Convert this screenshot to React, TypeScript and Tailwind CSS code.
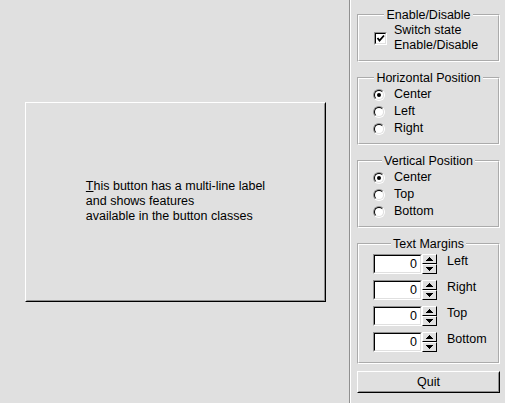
import React from 'react';
import clsx from 'clsx';

function Group({ title, className, children }: { title: string; className?: string; children: React.ReactNode }) {
    return (
        <fieldset className={clsx('border-2 border-white [border-style:groove]', className)}>
            <legend className="mx-auto px-[2px] leading-[16px]">{title}</legend>
            <div className="pl-[14px]">{children}</div>
        </fieldset>
    );
}

function Radio({ checked, label }: { checked?: boolean; label: string }) {
    return (
        <div className="flex h-[17px] items-center">
            <span className="flex h-[12px] w-[12px] rounded-full border border-t-[#909090] border-l-[#909090] border-b-white border-r-white">
                <span className="flex flex-1 items-center justify-center rounded-full border border-t-black border-l-black border-b-[#e0e0e0] border-r-[#e0e0e0] bg-white">
                    {checked && <span className="h-[4px] w-[4px] rounded-full bg-black" />}
                </span>
            </span>
            <span className="ml-[9px]">{label}</span>
        </div>
    );
}

function SpinButton({ up }: { up?: boolean }) {
    return (
        <div className="flex h-[10px] items-center justify-center border border-t-white border-l-white border-b-black border-r-black">
            <svg width="7" height="4" viewBox="0 0 7 4" shapeRendering="crispEdges">
                {up ? <polygon points="0,4 3.5,0 7,4" fill="black" /> : <polygon points="0,0 3.5,4 7,0" fill="black" />}
            </svg>
        </div>
    );
}

function Spinner({ label }: { label: string }) {
    return (
        <div className="flex h-[20px] items-start">
            <div className="flex h-[20px] w-[49px] border border-t-[#909090] border-l-[#909090] border-b-white border-r-white">
                <div className="flex flex-1 items-center justify-end border border-t-black border-l-black border-b-[#e0e0e0] border-r-[#e0e0e0] bg-white pr-[3px]">
                    0
                </div>
            </div>
            <div className="flex w-[15px] flex-col">
                <SpinButton up />
                <SpinButton />
            </div>
            <span className="ml-[10px] leading-[15px]">{label}</span>
        </div>
    );
}

export default function App() {
    return (
        <div className="flex h-[403px] w-[505px] overflow-hidden bg-[#e0e0e0] font-['Liberation_Sans',Arial,sans-serif] text-[12.5px] leading-[15px] text-black">
            {/* Big multi-line button */}
            <div className="flex w-[349px] items-center justify-center pl-[2px]">
                <div className="h-[200px] w-[301px] border border-t-white border-l-white border-b-black border-r-black">
                    <div className="flex h-full items-center justify-center border border-t-[#e0e0e0] border-l-[#e0e0e0] border-b-[#909090] border-r-[#909090]">
                        <div className="text-left">
                            <div><span className="underline">T</span>his button has a multi-line label</div>
                            <div>and shows features</div>
                            <div>available in the button classes</div>
                        </div>
                    </div>
                </div>
            </div>

            <div className="w-[2px] border-l border-r border-l-[#909090] border-r-white" />

            {/* Controls */}
            <div className="flex flex-1 flex-col pl-[6px] pr-[5px] pt-[7px]">
                <Group title="Enable/Disable" className="pb-[7px]">
                    <div className="flex items-center">
                        <span className="ml-[1px] flex h-[13px] w-[13px] border border-t-[#909090] border-l-[#909090] border-b-white border-r-white">
                            <span className="flex flex-1 items-center justify-center border border-t-black border-l-black border-b-[#e0e0e0] border-r-[#e0e0e0] bg-white">
                                <svg width="9" height="9" viewBox="0 0 9 9">
                                    <path d="M1.5 4 L3.5 6.5 L8 1.5" stroke="black" strokeWidth="1.8" fill="none" />
                                </svg>
                            </span>
                        </span>
                        <div className="ml-[7px]">
                            <div>Switch state</div>
                            <div>Enable/Disable</div>
                        </div>
                    </div>
                </Group>

                <Group title="Horizontal Position" className="mt-[8px] pb-[6px]">
                    <Radio checked label="Center" />
                    <Radio label="Left" />
                    <Radio label="Right" />
                </Group>

                <Group title="Vertical Position" className="mt-[8px] pb-[6px]">
                    <Radio checked label="Center" />
                    <Radio label="Top" />
                    <Radio label="Bottom" />
                </Group>

                <Group title="Text Margins" className="mt-[8px] pb-[10px]">
                    <div className="flex flex-col gap-[6px] pt-[2px]">
                        <Spinner label="Left" />
                        <Spinner label="Right" />
                        <Spinner label="Top" />
                        <Spinner label="Bottom" />
                    </div>
                </Group>

                <button className="mt-[7px] h-[22px] w-full border border-t-white border-l-white border-b-black border-r-black">
                    <div className="flex h-full items-center justify-center border border-t-[#e0e0e0] border-l-[#e0e0e0] border-b-[#909090] border-r-[#909090]">
                        Quit
                    </div>
                </button>
            </div>
        </div>
    );
}
